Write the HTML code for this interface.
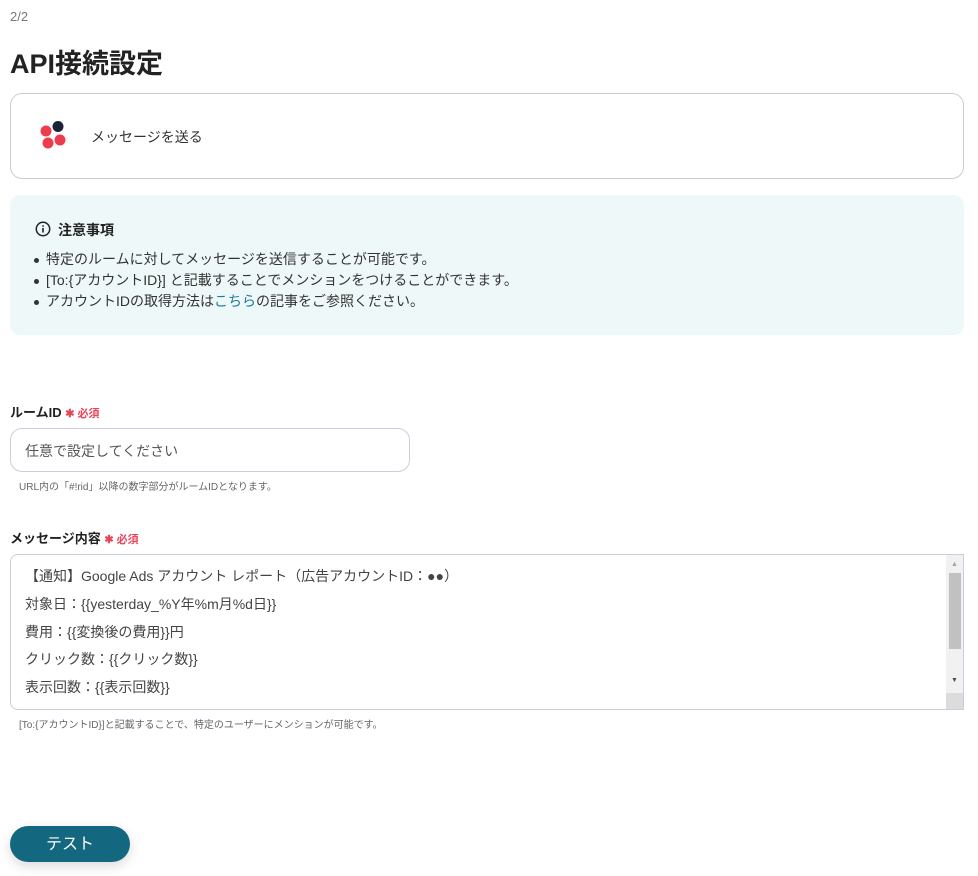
<!DOCTYPE html>
<html><head><meta charset="utf-8"><style>
*{margin:0;padding:0;box-sizing:border-box}
body{width:978px;height:876px;background:#fff;font-family:"Liberation Sans","Noto Sans CJK JP",sans-serif;color:#333;position:relative;overflow:hidden}
.a{position:absolute;white-space:nowrap}
.b{position:relative;padding-left:12px}
.b:before{content:"";position:absolute;left:0;top:9px;width:5px;height:5px;border-radius:50%;background:#333}
</style></head><body>
<div class="a" style="left:10px;top:9px;font-size:13px;color:#777">2/2</div>
<div class="a" style="left:10px;top:42px;font-size:27px;font-weight:bold;color:#222">API接続設定</div>
<div class="a" style="left:10px;top:93px;width:954px;height:86px;border:1px solid #ccc;border-radius:12px"></div>
<svg class="a" style="left:38px;top:119px" width="34" height="34" viewBox="0 0 34 34">
<circle cx="20" cy="7.5" r="5.5" fill="#1b2437"/><circle cx="8" cy="12" r="5.5" fill="#ee3c4f"/><circle cx="10" cy="24" r="5.5" fill="#ee3c4f"/><circle cx="22" cy="21" r="5.5" fill="#ee3c4f"/></svg>
<div class="a" style="left:91px;top:127px;font-size:14px">メッセージを送る</div>
<div class="a" style="left:10px;top:195px;width:954px;height:140px;background:#eff8f8;border-radius:10px"></div>
<svg class="a" style="left:35px;top:221px" width="16" height="16" viewBox="0 0 16 16"><circle cx="8" cy="8" r="6.7" fill="none" stroke="#222" stroke-width="1.5"/><rect x="7.2" y="7" width="1.6" height="4.5" fill="#222"/><circle cx="8" cy="5" r="0.9" fill="#222"/></svg>
<div class="a" style="left:58px;top:220px;font-size:14px;font-weight:bold;color:#222">注意事項</div>
<div class="a" style="left:34px;top:249px;font-size:14px;line-height:21px">
<div class="b">特定のルームに対してメッセージを送信することが可能です。</div>
<div class="b">[To:{アカウントID}] と記載することでメンションをつけることができます。</div>
<div class="b">アカウントIDの取得方法は<span style="color:#1e7b9a">こちら</span>の記事をご参照ください。</div></div>
<div class="a" style="left:10px;top:402px;font-size:13px;font-weight:bold;color:#222">ルームID <span style="color:#e8445a;font-size:11px">✱ 必須</span></div>
<div class="a" style="left:10px;top:428px;width:400px;height:44px;border:1px solid #ccd;border-radius:12px"></div>
<div class="a" style="left:25px;top:441px;font-size:14px;color:#555">任意で設定してください</div>
<div class="a" style="left:19px;top:478px;font-size:10px;color:#666">URL内の「#!rid」以降の数字部分がルームIDとなります。</div>
<div class="a" style="left:10px;top:528px;font-size:13px;font-weight:bold;color:#222">メッセージ内容 <span style="color:#e8445a;font-size:11px">✱ 必須</span></div>
<div class="a" style="left:10px;top:554px;width:954px;height:156px;border:1px solid #ccd;border-radius:8px 0 0 8px;overflow:hidden">
<div class="a" style="left:14px;top:8px;font-size:14px;line-height:27.8px;color:#444">【通知】Google Ads アカウント レポート（広告アカウントID：●●）<br>対象日：{{yesterday_%Y年%m月%d日}}<br>費用：{{変換後の費用}}円<br>クリック数：{{クリック数}}<br>表示回数：{{表示回数}}</div>
<div class="a" style="left:935px;top:0;width:17px;height:156px;background:#f1f1f1"></div>
<div class="a" style="left:938px;top:18px;width:12px;height:76px;background:#c1c1c1"></div>
<div class="a" style="left:940px;top:6px;font-size:7px;color:#a3a3a3">▲</div>
<div class="a" style="left:940px;top:122px;font-size:7px;color:#505050">▼</div>
<div class="a" style="left:935px;top:138px;width:17px;height:18px;background:#dcdcdc"></div>
</div>
<div class="a" style="left:19px;top:716px;font-size:10px;color:#666">[To:{アカウントID}]と記載することで、特定のユーザーにメンションが可能です。</div>
<div class="a" style="left:10px;top:826px;width:120px;height:36px;background:#13687f;border-radius:18px;color:#fff;font-size:16px;text-align:center;line-height:38px;box-shadow:0 4px 12px rgba(0,0,0,.15)">テスト</div>
</body></html>
